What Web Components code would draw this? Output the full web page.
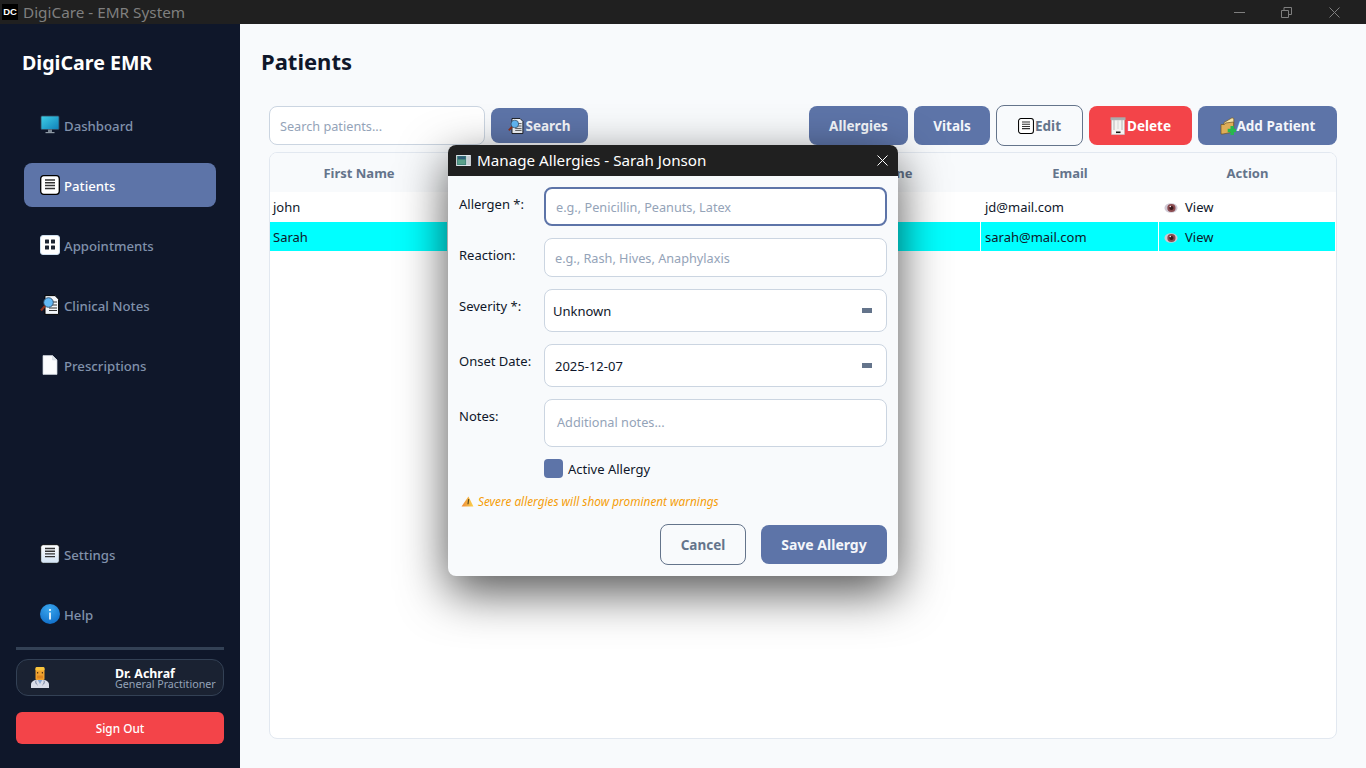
<!DOCTYPE html>
<html lang="en"><head><meta charset="utf-8"><title>DigiCare - EMR System</title>
<style>
html,body{margin:0;padding:0;width:1366px;height:768px;overflow:hidden;background:#f8fafc;font-family:"Noto Sans","Open Sans",sans-serif;color:#0f172a}
</style></head><body>
<dc-app>
  <dc-titlebar slot="title">DigiCare - EMR System</dc-titlebar>
  <dc-sidebar slot="side">
    <span slot="brand">DigiCare EMR</span>
    <dc-nav slot="top" icon="monitor">Dashboard</dc-nav>
    <dc-nav slot="top" icon="list" active>Patients</dc-nav>
    <dc-nav slot="top" icon="grid">Appointments</dc-nav>
    <dc-nav slot="top" icon="search">Clinical Notes</dc-nav>
    <dc-nav slot="top" icon="page">Prescriptions</dc-nav>
    <dc-nav slot="bottom" icon="list2">Settings</dc-nav>
    <dc-nav slot="bottom" icon="info">Help</dc-nav>
    <dc-user slot="user" name="Dr. Achraf" role="General Practitioner"></dc-user>
  </dc-sidebar>
  <dc-main slot="main">
    <span slot="heading">Patients</span>
    <dc-toolbar slot="toolbar">
      <dc-input slot="left" style="width:216px;height:39px" ph="Search patients..."></dc-input>
      <dc-btn slot="left" kind="primary" icon="search" style="width:97px;height:35px">Search</dc-btn>
      <dc-btn slot="right" kind="primary" style="width:99px">Allergies</dc-btn>
      <dc-btn slot="right" kind="primary" style="width:76px">Vitals</dc-btn>
      <dc-btn slot="right" kind="outline" icon="list" style="width:87px;height:41px">Edit</dc-btn>
      <dc-btn slot="right" kind="danger" icon="trash" style="width:103px">Delete</dc-btn>
      <dc-btn slot="right" kind="primary" icon="folder" style="width:139px">Add Patient</dc-btn>
    </dc-toolbar>
    <dc-table slot="table"></dc-table>
  </dc-main>
</dc-app>
<dc-dialog heading="Manage Allergies - Sarah Jonson">
  <dc-field label="Allergen *:" style="--h:39px"><dc-input focus ph="e.g., Penicillin, Peanuts, Latex"></dc-input></dc-field>
  <dc-field label="Reaction:" style="--h:39px"><dc-input ph="e.g., Rash, Hives, Anaphylaxis"></dc-input></dc-field>
  <dc-field label="Severity *:" style="--h:43px"><dc-input combo value="Unknown" pad="8"></dc-input></dc-field>
  <dc-field label="Onset Date:" style="--h:43px"><dc-input combo value="2025-12-07" pad="10"></dc-input></dc-field>
  <dc-field label="Notes:" style="--h:48px"><dc-input ph="Additional notes..." pad="12" top></dc-input></dc-field>
  <dc-field style="--h:19px"><dc-check>Active Allergy</dc-check></dc-field>
  <dc-warn>Severe allergies will show prominent warnings</dc-warn>
  <dc-actions>
    <dc-btn kind="outline" style="width:86px;height:41px">Cancel</dc-btn>
    <dc-btn kind="primary" style="width:126px;height:39px;font-size:14px">Save Allergy</dc-btn>
  </dc-actions>
</dc-dialog>
<script>
const ICONS={
monitor:`<svg viewBox="0 0 20 20"><defs><linearGradient id="m" x1="0" y1="0" x2="1" y2="1"><stop offset="0" stop-color="#3fd0e8"/><stop offset="1" stop-color="#0f7fb8"/></linearGradient></defs><rect x="1" y="1" width="18" height="13.5" rx="1" fill="url(#m)" stroke="#33475c" stroke-width=".8"/><rect x="8" y="14.5" width="4" height="2.5" fill="#7b8794"/><rect x="5.5" y="17" width="9" height="1.2" fill="#8e99a5"/></svg>`,
list:`<svg viewBox="0 0 20 20"><rect x=".7" y=".7" width="18.6" height="18.6" rx="3" fill="#fff" stroke="#000" stroke-width="1.3"/><path d="M5 5h10M5 7.8h10M5 10.6h10M5 13.4h10" stroke="#333" stroke-width="1.5"/></svg>`,
list2:`<svg viewBox="0 0 20 20"><defs><linearGradient id="l2" x1="0" y1="0" x2="0" y2="1"><stop offset="0" stop-color="#fff"/><stop offset="1" stop-color="#d3e4f5"/></linearGradient></defs><rect x=".7" y=".7" width="18.6" height="18.6" rx="2.5" fill="url(#l2)" stroke="#000" stroke-width=".8"/><path d="M5 4.5h10M5 7.2h10M5 9.9h10M5 12.6h10" stroke="#333" stroke-width="1.4"/></svg>`,
grid:`<svg viewBox="0 0 20 20"><rect x=".5" y=".5" width="19" height="19" rx="2.5" fill="#fff" stroke="#cfe0f0"/><rect x="5" y="4.5" width="4" height="4" rx=".5" fill="#1d2533"/><rect x="11" y="4.5" width="4" height="4" rx=".5" fill="#1d2533"/><rect x="5" y="10.5" width="4" height="4" rx=".5" fill="#1d2533"/><rect x="11" y="10.5" width="4" height="4" rx=".5" fill="#1d2533"/></svg>`,
search:`<svg viewBox="0 0 20 20"><path d="M5 .6h10l3.6 3.6v15.2H5z" fill="#f3f6fa" stroke="#000" stroke-width="1"/><path d="M11 7h6M12 10h5M9 13h8M9 15.500h8" stroke="#333" stroke-width="1"/><circle cx="8.500" cy="7.500" r="4.800" fill="#62b8f5" stroke="#2f4a66" stroke-width=".9"/><path d="M5 11L1 15.500" stroke="#8a2f1c" stroke-width="2.200"/></svg>`,
page:`<svg viewBox="0 0 16 20"><path d="M1 .6h9.500L15 5v14.400H1z" fill="#fbfcfd" stroke="#cfd6de" stroke-width=".7"/><path d="M10.500.6V5H15" fill="#dfe4ea" stroke="#cfd6de" stroke-width=".5"/></svg>`,
info:`<svg viewBox="0 0 20 20"><defs><radialGradient id="i" cx=".45" cy=".25" r=".9"><stop offset="0" stop-color="#3aa7ee"/><stop offset="1" stop-color="#0a66c4"/></radialGradient></defs><circle cx="10" cy="10" r="10" fill="url(#i)"/><rect x="9" y="8.500" width="2" height="7" fill="#d8ecfb"/><rect x="9" y="5" width="2" height="2" fill="#d8ecfb"/></svg>`,
trash:`<svg viewBox="0 0 16 18"><rect x=".5" y=".3" width="15" height="2.700" fill="#a9abad"/><path d="M1.500 3h13v14.700h-13z" fill="#f4f4f2" stroke="#b5b7b8" stroke-width=".5"/><path d="M4 3v10M12 3v10" stroke="#b5b7b8" stroke-width="1"/><path d="M8 3v9" stroke="#d4d6d6" stroke-width="1"/><rect x="6" y="14.500" width="4.500" height="1.600" fill="#1a1a1a"/></svg>`,
folder:`<svg viewBox="0 0 16 18"><path d="M4 5.500L12 .8l1.800.7v11L4 16z" fill="#f7e3a6" stroke="#6e5524" stroke-width=".7"/><path d="M1 7.500h3.500l1-1.500 8 -1v10L3 17H1z" fill="#dfae58" stroke="#6e5524" stroke-width=".7"/><rect x="10.500" y="9" width="3.400" height="9" fill="#27b84e"/><rect x="7.700" y="11.800" width="8.300" height="3.400" fill="#27b84e"/></svg>`,
eye:`<svg viewBox="0 0 16 16"><ellipse cx="8" cy="8" rx="7.500" ry="5.500" fill="#cfc8d4"/><circle cx="8.500" cy="8" r="4.700" fill="#8a4a4e"/><circle cx="8.500" cy="8" r="2.400" fill="#3a1a1e"/><circle cx="7.200" cy="6.300" r=".9" fill="#f5e8ea"/></svg>`,
warn:`<svg viewBox="0 0 14 12"><defs><linearGradient id="w" x1="0" y1="0" x2="1" y2="0"><stop offset="0" stop-color="#ef8a3a"/><stop offset="1" stop-color="#fbd24a"/></linearGradient></defs><path d="M8 .5L13.500 11.500H.5z" fill="url(#w)"/><path d="M8.300 3.500L7.500 9" stroke="#5b4a20" stroke-width="1.300"/></svg>`,
win:`<svg viewBox="0 0 16 12"><rect width="16" height="12" fill="#e8edf2"/><rect x="1" y="1" width="10" height="10" fill="#3f7f78"/><rect x="2" y="5" width="8" height="5" fill="#5aa08a"/><rect x="2" y="1.500" width="8" height="3" fill="#2f5f78"/><rect x="12" y="1" width="3" height="10" fill="#c6ccd2"/></svg>`,
doctor:`<svg viewBox="0 0 18 21"><path d="M0 21v-3.500C0 14.500 3.500 13 6 12.500h6c2.500.5 6 2 6 5V21z" fill="#d8dce8"/><path d="M6.500 12.500L9 17l2.500-4.500z" fill="#86a8d4"/><path d="M5 13.500c-.8 2 .2 3.500 1.500 4.500M13 13.500c.8 2 -.2 3.500-1.500 4.500" stroke="#5e6c8c" stroke-width=".8" fill="none"/><rect x="4.500" y="1" width="9" height="12" rx="1.500" fill="#f0a22e"/><rect x="4.500" y="0" width="9" height="3.500" rx="1.200" fill="#fac53d"/><rect x="6" y="5" width="1.200" height="1.500" fill="#5a3512"/><rect x="10.800" y="5" width="1.200" height="1.500" fill="#5a3512"/><rect x="6" y="8.500" width="6" height="3" fill="#e0851f"/></svg>`
};
function def(tag,css,html){
  customElements.define(tag,class extends HTMLElement{
    constructor(){super();const s=this.attachShadow({mode:'open'});s.innerHTML=`<style>${css}</style>`+(typeof html==='function'?'':html);}
    connectedCallback(){if(typeof html==='function'){const t=document.createElement('template');t.innerHTML=html(this);this.shadowRoot.appendChild(t.content);} }
  });
}
def('dc-icon',':host{display:inline-block;line-height:0;flex:none}svg{width:100%;height:100%;display:block}',e=>ICONS[e.getAttribute('name')]||'');

def('dc-app',':host{display:flex;flex-direction:column;width:1366px;height:768px}.r{display:flex;flex:1;min-height:0}',
 '<slot name="title"></slot><div class="r"><slot name="side"></slot><slot name="main"></slot></div>');

def('dc-titlebar',`:host{display:flex;align-items:center;height:24px;background:#202020;color:#7f7f7f;font-size:15.300px;flex:none}
.logo{width:16px;height:16px;margin:0 5px 0 2px;background:#000;color:#fff;font:700 9.500px/16px "Liberation Sans",sans-serif;text-align:center}
.t{flex:1}.c{display:flex;margin-right:8px}.c div{width:47.500px;display:flex;justify-content:center;align-items:center}
svg{display:block;stroke:#7f7f7f;fill:none;stroke-width:1}`,
 `<div class="logo">DC</div><div class="t"><slot></slot></div><div class="c">
 <div><svg width="11" height="11"><path d="M0 5.500h11"/></svg></div>
 <div><svg width="11" height="11"><path d="M.5 3.500h7v7h-7zM3 3.500V.5h7.500v7h-3"/></svg></div>
 <div><svg width="11" height="11"><path d="M.5.5l10 10M10.500.5l-10 10"/></svg></div></div>`);

def('dc-sidebar',`:host{display:flex;flex-direction:column;width:240px;flex:none;background:#0f172a;box-sizing:border-box;padding:24px 16px 24px}
.brand{color:#fff;font-size:19.600px;font-weight:700;line-height:30px;margin-left:6px;margin-bottom:25px}
.nav{display:flex;flex-direction:column;gap:16px;margin:0 8px}
.sp{flex:1}.hr{height:3px;background:#334155;margin:11px 0 9px}
.so{height:32px;background:#f34449;color:#fff;border-radius:6px;font-size:11.800px;font-weight:500;display:flex;align-items:center;justify-content:center;margin-top:16px}`,
 `<div class="brand"><slot name="brand"></slot></div><div class="nav"><slot name="top"></slot></div><div class="sp"></div>
 <div class="nav"><slot name="bottom"></slot></div><div class="hr"></div><slot name="user"></slot><div class="so">Sign Out</div>`);

const navSizes={monitor:[20,20],list:[20,20],list2:[20,20],grid:[20,20],search:[20,20],page:[16,20],info:[20,20]};
def('dc-nav',`:host{display:flex;align-items:center;height:44px;border-radius:8px;box-sizing:border-box;padding-left:16px;color:#8091ab;font-size:13.200px;font-weight:500}
:host([active]){background:#5d74a8;color:#fff}.i{width:20px;display:flex;justify-content:center;margin-right:4px}span{position:relative;top:1px}`,
 e=>{const n=e.getAttribute('icon'),s=navSizes[n];return `<div class="i"><dc-icon name="${n}" style="width:${s[0]}px;height:${s[1]}px"></dc-icon></div><span><slot></slot></span>`});

def('dc-user',`:host{display:flex;align-items:center;height:37px;border:1px solid #334155;border-radius:12px;background:#1a2232;box-sizing:border-box}
dc-icon{width:18px;height:21px;margin-left:14px}.t{margin-left:66px;display:flex;flex-direction:column;padding-top:2px}
.n{color:#fff;font-size:12.400px;font-weight:700;line-height:11px}.r{color:#94a3b8;font-size:10.700px;line-height:11px;white-space:nowrap}`,
 e=>`<dc-icon name="doctor"></dc-icon><div class="t"><div class="n">${e.getAttribute('name')}</div><div class="r">${e.getAttribute('role')}</div></div>`);

def('dc-main',`:host{display:flex;flex-direction:column;flex:1;min-width:0;box-sizing:border-box;padding:21px 29px 29px 21px;background:#f8fafc}
.h{font-size:22px;font-weight:700;line-height:32px;color:#0f172a}
.b{margin-left:8px;display:flex;flex-direction:column;flex:1;min-height:0}`,
 `<div class="h"><slot name="heading"></slot></div><div class="b"><slot name="toolbar"></slot><slot name="table"></slot></div>`);

def('dc-toolbar',`:host{display:flex;align-items:center;justify-content:space-between;height:41px;margin-top:28px;margin-bottom:6px;flex:none}
.g{display:flex;align-items:center;gap:6px}`,'<div class="g"><slot name="left"></slot></div><div class="g"><slot name="right"></slot></div>');

def('dc-btn',`:host{display:flex;align-items:center;justify-content:center;height:39px;box-sizing:border-box;border-radius:8px;font-size:13.500px;font-weight:700;flex:none}
:host([kind=primary]){background:#5d74a8;color:#f4f6fa}
:host([kind=danger]){background:#f34449;color:#fff}
:host([kind=outline]){background:#f8fafc;color:#64748b;border:1px solid #64748b}
dc-icon{width:16px;height:18px;margin-right:1px}`,
 e=>`${e.getAttribute('icon')?`<dc-icon name="${e.getAttribute('icon')}"></dc-icon>`:''}<slot></slot>`);

def('dc-input',`:host{display:flex;align-items:center;height:100%;box-sizing:border-box;background:#fff;border:1px solid #cbd5e1;border-radius:8px;font-size:12.700px;flex:none;position:relative;padding:0 10px}
:host([focus]){border:2px solid #5d74a8}
:host([top]){align-items:flex-start;padding-top:13px}
.p{color:#94a3b8}.v{color:#0f172a;flex:1;font-size:13px}
.a{width:10px;height:5px;background:#64748b;margin-right:4px}`,
 e=>{const pad=e.getAttribute('pad');const st=pad?`style="margin-left:${pad-10}px"`:'';
  if(e.hasAttribute('combo'))return `<span class="v" ${st}>${e.getAttribute('value')}</span><div class="a"></div>`;
  return `<span class="p" ${st}>${e.getAttribute('ph')}</span>`});

const COLS=['First Name','','','Phone','Email','Action'];
def('dc-table',`:host{display:block;flex:1;border:1px solid #e2e8f0;border-radius:8px;background:#fff;overflow:hidden;font-size:13px;box-sizing:border-box}
.r{display:grid;grid-template-columns:178px 178px 177px 178px 178px 177px}
.h{height:39px;background:#f8fafc;color:#64748b;font-weight:700;text-align:center;line-height:41px}
.d{height:29px;margin-bottom:1px;line-height:31px;color:#0f172a;column-gap:0}
.d div{padding-left:3px;border-right:1px solid #fff;box-sizing:border-box;white-space:nowrap}
.s{background:#0ff}.v{display:flex;align-items:center;padding-left:5px!important;line-height:29px}
.v dc-icon{width:14px;height:14px;margin-right:7px}`,
 ()=>{const row=(a,e,s)=>`<div class="r d ${s?'s':''}"><div>${a}</div><div></div><div></div><div></div><div style="padding-left:4px">${e}</div><div class="v"><dc-icon name="eye"></dc-icon>View</div></div>`;
 return `<div class="r h">${COLS.map(c=>`<div>${c}</div>`).join('')}</div>`+row('john','jd@mail.com')+row('Sarah','sarah@mail.com',1)});

def('dc-dialog',`:host{position:absolute;left:448px;top:145px;width:450px;height:431px;border-radius:8px;background:#f8fafc;box-shadow:0 16px 48px rgba(0,0,0,.68);overflow:visible;display:flex;flex-direction:column}
.t{height:31px;background:#202020;color:#fff;display:flex;align-items:center;font-size:15.200px;border-radius:8px 8px 0 0;flex:none;padding-left:8px;box-sizing:border-box;padding-bottom:1px}
.t dc-icon{width:15px;height:11px;margin-right:6px;margin-top:1px}.sp{flex:1}.x{margin-right:10px;display:block;stroke:#fff;fill:none}
.b{padding:11px;display:flex;flex-direction:column;gap:12px;flex:1}`,
 e=>`<div class="t"><dc-icon name="win"></dc-icon><span>${e.getAttribute('heading')}</span><div class="sp"></div><svg class="x" width="11" height="11"><path d="M.5.5l10 10M10.500.5l-10 10"/></svg></div><div class="b"><slot></slot></div>`);

def('dc-field',`:host{display:grid;grid-template-columns:85px 343px;height:var(--h)}
.l{font-size:13px;line-height:18px;padding-top:8px;color:#0f172a}::slotted(*){grid-column:2}`,
 e=>`<div class="l">${e.getAttribute('label')||''}</div><slot></slot>`);

def('dc-check',`:host{display:flex;align-items:center;font-size:13px;color:#0f172a}
i{width:19px;height:19px;border-radius:4px;background:#5d74a8;margin-right:5px;flex:none}`,'<i></i><slot></slot>');

def('dc-warn',`:host{display:flex;align-items:center;height:24px;box-sizing:border-box;padding-bottom:2px;font-size:11.800px;font-style:italic;color:#f59e0b;padding-left:2px;margin-bottom:-2px}
dc-icon{width:13px;height:11px;margin-right:4px}`,'<dc-icon name="warn"></dc-icon><slot></slot>');

def('dc-actions',`:host{display:flex;justify-content:flex-end;align-items:center;gap:15px;height:41px}`,'<slot></slot>');
</script>
</body></html>
